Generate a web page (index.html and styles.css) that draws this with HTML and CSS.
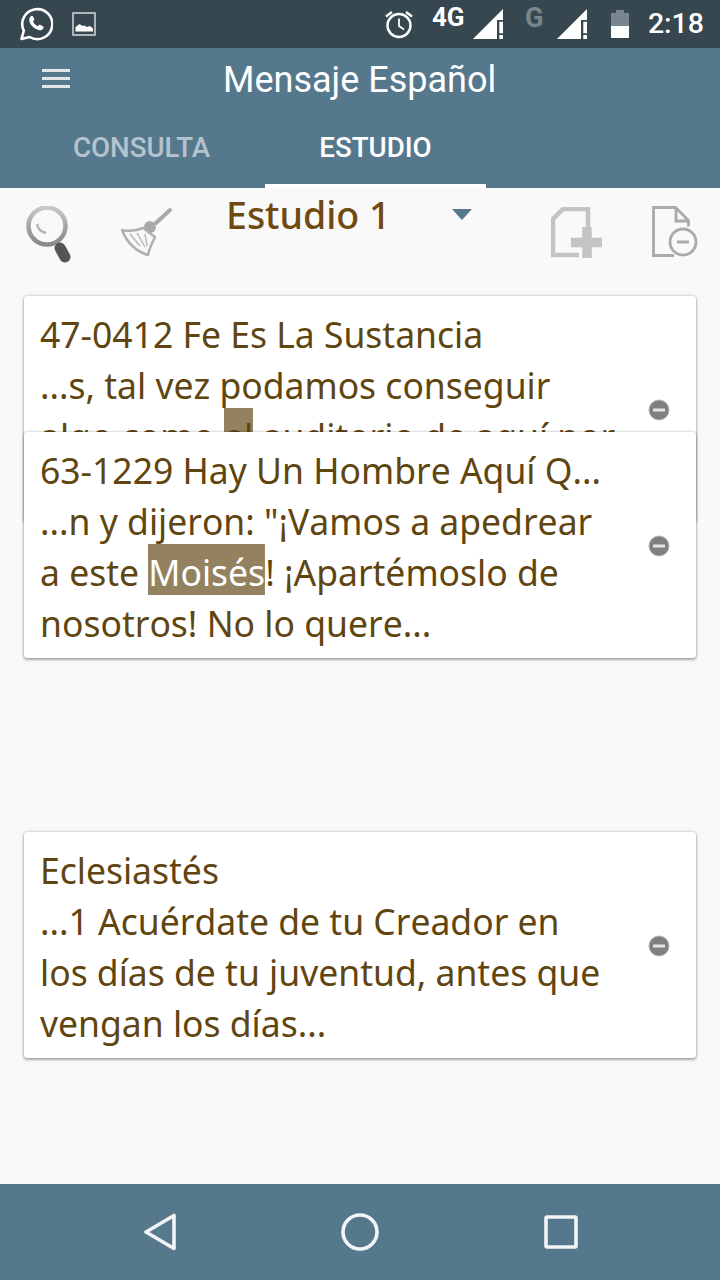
FILE: index.html
```html
<!DOCTYPE html>
<html lang="es">
<head>
<meta charset="utf-8">
<title>Mensaje Español</title>
<link rel="stylesheet" href="styles.css">
</head>
<body>
<div class="screen">
  <header class="status">
    <div class="status-left">
      <svg class="ic-wa" width="34" height="34" viewBox="0 0 34 34"><path d="M2.500 32l2.300-8.300A15 15 0 1 1 10.600 30z" fill="none" stroke="#fff" stroke-width="2.600" stroke-linejoin="round"/><path d="M11.500 9.500c1-1 2-1 2.500 0l1.200 2.500c.3.700 0 1.200-.5 1.700l-.8.900c1 2 2.700 3.700 4.800 4.700l1-1c.5-.5 1-.6 1.700-.3l2.400 1.200c.8.400 1 1.200.4 2.200-1.200 2-3.500 2.300-6 1.200-3.600-1.500-6.300-4.300-7.600-7.700-.7-2.100-.5-4 1-5.400z" fill="#fff"/></svg>
      <svg class="ic-img" width="24" height="24" viewBox="0 0 24 24"><rect x="1" y="1" width="22" height="22" fill="none" stroke="#d5dadd" stroke-width="1.500"/><path d="M3.500 19.500v-4.500l4-3 3 2 2-.5 2.500 1.500 3-1 3 2.500v3z" fill="#fff"/></svg>
    </div>
    <div class="status-right">
      <svg class="ic-alarm" width="30" height="30" viewBox="0 0 30 30"><circle cx="15" cy="16.500" r="11.500" fill="none" stroke="#fff" stroke-width="2.400"/><path d="M15 9.500v7.500l5 3.500" fill="none" stroke="#fff" stroke-width="1.800"/><path d="M2 7.500l6-4.500M28 7.500l-6-4.500" stroke="#fff" stroke-width="2.400"/></svg>
      <span class="net net-4g">4G</span>
      <svg class="ic-sig" width="30" height="30" viewBox="0 0 30 30"><path d="M0 30L30 0v11h-6v19z" fill="#fff"/><path d="M26.300 12.700h3.700v11.600h-3.700zM26.300 26h3.700v4h-3.700z" fill="#fff"/></svg>
      <span class="net net-g">G</span>
      <svg class="ic-sig" width="30" height="30" viewBox="0 0 30 30"><path d="M0 30L30 0v11h-6v19z" fill="#fff"/><path d="M26.300 12.700h3.700v11.600h-3.700zM26.300 26h3.700v4h-3.700z" fill="#fff"/></svg>
      <svg class="ic-bat" width="18" height="28" viewBox="0 0 18 28"><path d="M0 3h5V0h8v3h5v25H0z" fill="#78878f"/><rect y="16" width="18" height="12" fill="#fff"/></svg>
      <span class="clock">2:18</span>
    </div>
  </header>

  <section class="appbar">
    <div class="title-row">
      <svg class="ic-menu" width="28" height="20" viewBox="0 0 28 20"><path d="M0 1.500h28M0 9.500h28M0 17.500h28" stroke="#dfe5e9" stroke-width="2.800"/></svg>
      <h1 class="title">Mensaje Español</h1>
    </div>
    <nav class="tabs">
      <span class="tab">CONSULTA</span>
      <span class="tab tab-active">ESTUDIO</span>
    </nav>
  </section>

  <section class="tools">
    <svg class="ic-search" width="50" height="58" viewBox="0 0 50 58">
      <defs><linearGradient id="g1" x1="0" y1="0" x2="0" y2="1"><stop offset="0" stop-color="#c9c9c9"/><stop offset=".5" stop-color="#a5a5a5"/><stop offset="1" stop-color="#8a8a8a"/></linearGradient></defs>
      <circle cx="23" cy="20" r="18.500" fill="none" stroke="url(#g1)" stroke-width="4.500"/>
      <path d="M13 18c1 5 4 8 9 9" fill="none" stroke="#b4b4b4" stroke-width="2.500"/>
      <path d="M36 42l5 9" stroke="#555" stroke-width="11" stroke-linecap="round"/>
    </svg>
    <svg class="ic-broom" width="52" height="52" viewBox="0 0 52 52"><path d="M49 4L35 17" stroke="#a9a9a9" stroke-width="4" stroke-linecap="round"/><circle cx="29" cy="21" r="6" fill="#a9a9a9"/><path d="M1 24c8 2 16 0 21-2l12 9c-3 6-6 12-7 18C16 46 6 37 1 24z" fill="#f9f9f9" stroke="#b0b0b0" stroke-width="2.500" stroke-linejoin="round"/><path d="M9 28l10 12M16 27l8 14M24 28l2 12" stroke="#b8b8b8" stroke-width="1.500"/></svg>
    <div class="picker">
      <span class="picker-name">Estudio 1</span>
      <svg class="caret" width="20" height="11" viewBox="0 0 20 11"><path d="M0 0h20L10 11z" fill="#56788c"/></svg>
    </div>
    <svg class="ic-add" width="52" height="52" viewBox="0 0 52 52"><path d="M37 20V2H12L2 12v36h26" fill="none" stroke="#c4c4c4" stroke-width="4.500"/><path d="M20 35.500h31M36 20v31" stroke="#c4c4c4" stroke-width="9.500"/></svg>
    <svg class="ic-del" width="46" height="52" viewBox="0 0 46 52"><path d="M22 49.500H1.500V1.500h22l13 13v6" fill="none" stroke="#aaa" stroke-width="2.800"/><path d="M24 2v13h13" fill="none" stroke="#aaa" stroke-width="2.800"/><circle cx="31" cy="36" r="13" fill="#f9f9f9" stroke="#aaa" stroke-width="2.800"/><path d="M25 36h12" stroke="#aaa" stroke-width="3"/></svg>
  </section>

  <main class="list">
    <article class="card">
      <p class="card-text">47-0412 Fe Es La Sustancia<br>...s, tal vez podamos conseguir<br>algo como <mark class="hl">el</mark> auditorio de aquí por</p>
      <svg class="ic-minus" width="22" height="22" viewBox="0 0 22 22"><circle cx="11" cy="11" r="10" fill="#7f7f7f" stroke="#b5b5b5" stroke-width="1"/><rect x="5" y="9.500" width="12" height="3" fill="#e5e5e5"/></svg>
    </article>
    <article class="card card-over">
      <p class="card-text">63-1229 Hay Un Hombre Aquí Q...<br>...n y dijeron: "¡Vamos a apedrear<br>a este <mark class="hl hl-word">Moisés</mark>! ¡Apartémoslo de<br>nosotros! No lo quere...</p>
      <svg class="ic-minus" width="22" height="22" viewBox="0 0 22 22"><circle cx="11" cy="11" r="10" fill="#7f7f7f" stroke="#b5b5b5" stroke-width="1"/><rect x="5" y="9.500" width="12" height="3" fill="#e5e5e5"/></svg>
    </article>
    <article class="card card-last">
      <p class="card-text">Eclesiastés<br>...1 Acuérdate de tu Creador en<br>los días de tu juventud, antes que<br>vengan los días...</p>
      <svg class="ic-minus" width="22" height="22" viewBox="0 0 22 22"><circle cx="11" cy="11" r="10" fill="#7f7f7f" stroke="#b5b5b5" stroke-width="1"/><rect x="5" y="9.500" width="12" height="3" fill="#e5e5e5"/></svg>
    </article>
  </main>

  <footer class="navbar">
    <svg width="32" height="38" viewBox="0 0 32 38"><path d="M2 19L30 2.500v33z" fill="none" stroke="#f2f4f5" stroke-width="3.600" stroke-linejoin="round"/></svg>
    <svg width="38" height="38" viewBox="0 0 38 38"><circle cx="19" cy="19" r="17" fill="none" stroke="#f2f4f5" stroke-width="3.600"/></svg>
    <svg width="34" height="34" viewBox="0 0 34 34"><rect x="2" y="2" width="30" height="30" rx="1" fill="none" stroke="#f2f4f5" stroke-width="3.600"/></svg>
  </footer>
</div>
</body>
</html>
```
FILE: styles.css
```css
* { box-sizing: border-box; }
html, body { margin: 0; padding: 0; }
body { background: #f9f9f9; font-family: "Noto Sans", sans-serif; }
.screen { width: 720px; height: 1280px; display: flex; flex-direction: column; overflow: hidden; background: #f9f9f9; }

.status { height: 48px; flex: none; background: #37474f; display: flex; justify-content: space-between; align-items: center; color: #fff; font-family: Roboto, sans-serif; }
.status-left { display: flex; align-items: center; gap: 19px; padding-left: 19px; }
.status-right { display: flex; align-items: flex-start; height: 48px; padding-right: 16px; }
.ic-alarm { margin: 9px 18px 0 0; }
.net { font-weight: 700; line-height: 24px; margin-top: 5px; }
.net-4g { font-size: 26px; width: 33px; margin-right: 8px; white-space: nowrap; }
.net-g { font-size: 27px; width: 17px; color: #78878f; margin: 6px 15px 0 22px; }
.ic-sig { margin-top: 9px; }
.ic-bat { margin: 10px 0 0 24px; }
.clock { font-size: 28.500px; line-height: 48px; font-weight: 500; margin-left: 19px; white-space: nowrap; }

.appbar { height: 140px; flex: none; background: #56788c; display: flex; flex-direction: column; }
.title-row { height: 68px; display: flex; align-items: center; padding-left: 42px; }
.ic-menu { margin-top: -7px; }
.title { margin: 0 0 0 153px; font: 400 36px/1 Roboto, sans-serif; color: #fff; position: relative; top: -2px; white-space: nowrap; }
.tabs { flex: 1; display: flex; padding-left: 18px; }
.tab { width: 247px; height: 72px; display: flex; align-items: center; justify-content: center; font: 500 27.700px/1 Roboto, sans-serif; color: #b4c4cf; padding-bottom: 8px; }
.tab-active { width: 221px; color: #fff; border-bottom: 4px solid #fff; padding-bottom: 4px; }

.tools { height: 108px; flex: none; display: flex; align-items: flex-start; }
.ic-search { margin: 18px 0 0 24px; }
.ic-broom { margin: 18px 0 0 47px; }
.picker { width: 305px; margin-left: 53px; display: flex; align-items: flex-start; }
.picker-name { font-weight: 500; font-size: 37.500px; line-height: 56px; color: #6f4a10; white-space: nowrap; position: relative; top: -1px; }
.caret { margin: 21px 0 0 62px; }
.ic-add { margin: 19px 0 0 20px; }
.ic-del { margin: 18px 0 0 49px; }

.list { flex: 1; padding: 0 24px; display: flex; flex-direction: column; }
.card { position: relative; background: #fff; border-radius: 3px; box-shadow: 0 0 3px rgba(0,0,0,.28), 0 2px 3px rgba(0,0,0,.28); display: flex; align-items: center; padding: 13px 26px 9px 16px; height: 226px; flex: none; }
.card-over { margin-top: -90px; }
.card-last { margin-top: 174px; }
.card-text { flex: 1; min-height: 204px; margin: 0; font-size: 35.500px; line-height: 51px; font-kerning: none; color: #604510; white-space: nowrap; }
.hl { padding-top: 4px; background: linear-gradient(#94815f, #94815f) top / 100% 51px no-repeat; color: inherit; }
.hl-word { color: #fff; }
.ic-minus { flex: none; margin-top: -3px; }

.navbar { height: 96px; flex: none; background: #56788c; display: flex; align-items: center; gap: 165px; padding-left: 144px; }
```
